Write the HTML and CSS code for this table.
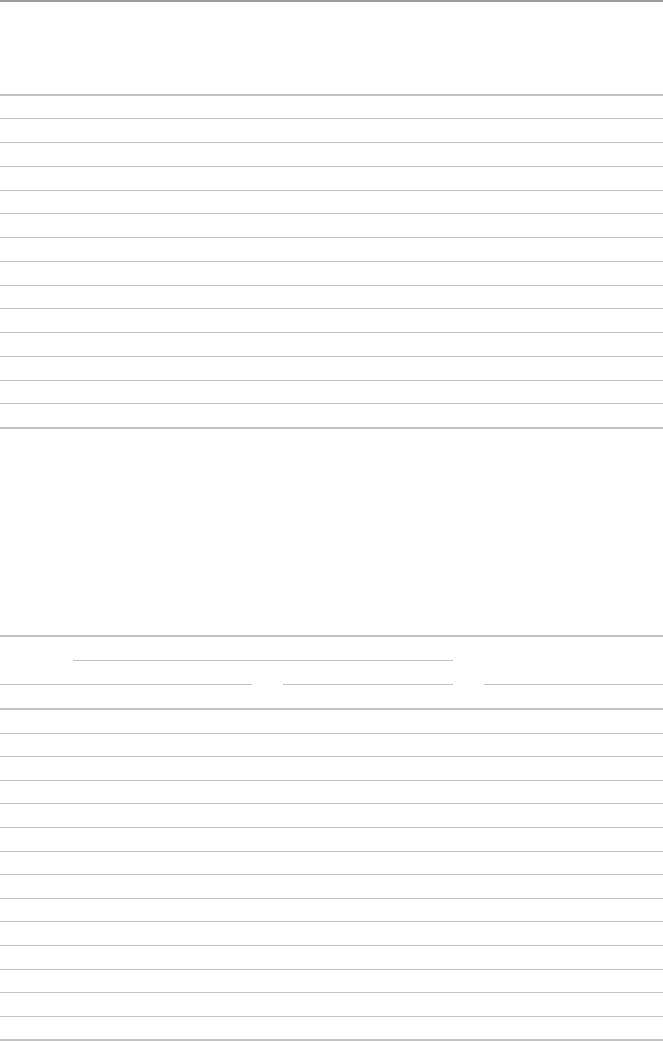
FILE: index.html
```html
<!DOCTYPE html>
<html lang="en">
<head>
<meta charset="utf-8">
<title>Tables</title>
<link rel="stylesheet" href="styles.css">
</head>
<body>
  <div class="gt-table first">
    <div class="heading"></div>
    <div class="body">
      <div class="row"></div><div class="row"></div><div class="row"></div><div class="row"></div>
      <div class="row"></div><div class="row"></div><div class="row"></div><div class="row"></div>
      <div class="row"></div><div class="row"></div><div class="row"></div><div class="row"></div>
      <div class="row"></div><div class="row"></div>
    </div>
  </div>

  <div class="gt-table second">
    <div class="spanner-row">
      <div class="spanner top"></div>
    </div>
    <div class="spanner-row split">
      <div class="spanner a"></div>
      <div class="spanner b"></div>
      <div class="spanner c"></div>
    </div>
    <div class="col-labels"></div>
    <div class="body">
      <div class="row"></div><div class="row"></div><div class="row"></div><div class="row"></div>
      <div class="row"></div><div class="row"></div><div class="row"></div><div class="row"></div>
      <div class="row"></div><div class="row"></div><div class="row"></div><div class="row"></div>
      <div class="row"></div><div class="row"></div>
    </div>
  </div>
</body>
</html>
```

FILE: styles.css
```css
html, body {
  margin: 0;
  padding: 0;
  background: #ffffff;
  font-family: "Liberation Sans", Arial, sans-serif;
  color: #333333;
}

.gt-table {
  width: 663px;
  display: flex;
  flex-direction: column;
  border-bottom: 2px solid #c2c2c2;
}

.first {
  border-top: 2px solid #9c9c9c;
}

.first .heading {
  height: 91.6px;
  border-bottom: 2px solid #c2c2c2;
}

.first .row {
  height: 22.75px;
}

.body {
  display: flex;
  flex-direction: column;
}

.row {
  border-bottom: 1px solid #c2c2c2;
}

.row:last-child {
  border-bottom: none;
}

.second {
  margin-top: 205.9px;
  border-top: 2px solid #c2c2c2;
}

.second .row {
  height: 22.6px;
}

.spanner-row {
  height: 24px;
  display: flex;
  align-items: flex-end;
}

.spanner {
  height: 23px;
  border-bottom: 1px solid #c2c2c2;
}

.spanner.top {
  margin-left: 73px;
  width: 380px;
}

.split {
  gap: 31px;
}

.spanner.a { width: 252px; }
.spanner.b { width: 170px; }
.spanner.c { flex: 1; }

.col-labels {
  height: 23px;
  border-bottom: 2px solid #c2c2c2;
}
```
